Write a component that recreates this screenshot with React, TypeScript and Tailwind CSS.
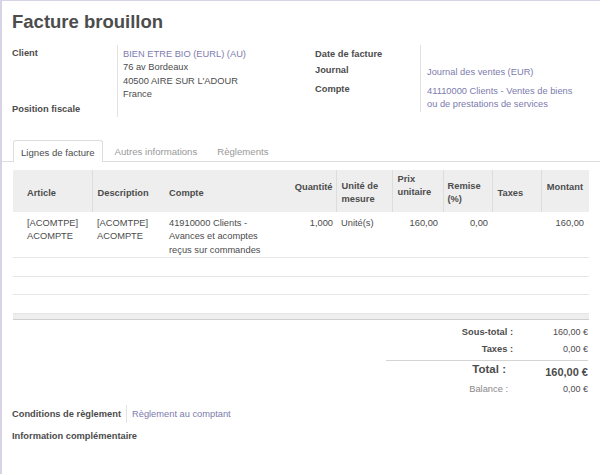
export default function App() {
  const link = "text-[#7c7bad]"

  return (
    <div className="h-[474px] w-[600px] overflow-hidden border-l-2 border-t border-[#d6d4e4] bg-white font-['Liberation_Sans',Arial,sans-serif] text-[9.3px] leading-[13.3px] text-[#4c4c4c]">
      {/* title */}
      <h1 className="pl-[10px] pt-[10px] text-[18.5px] font-bold leading-[22px] text-[#4c4c4c]">
        Facture brouillon
      </h1>

      {/* header groups */}
      <div className="mt-[12px] flex pl-[10px]">
        <div className="w-[303px]">
          <div className="flex">
            <div className="w-[105px] pt-[2px] font-bold">Client</div>
            <div className="flex-1 border-l border-[#e2e2e2] pl-[5px] pt-[3px]">
              <div className={link}>BIEN ETRE BIO (EURL) (AU)</div>
              <div>76 av Bordeaux</div>
              <div>40500 AIRE SUR L'ADOUR</div>
              <div>France</div>
            </div>
          </div>
          <div className="flex h-[16px]">
            <div className="w-[105px] pt-[2px] font-bold">Position fiscale</div>
            <div className="flex-1 border-l border-[#e2e2e2]"></div>
          </div>
        </div>

        <div className="flex-1">
          <div className="flex h-[16.5px]">
            <div className="w-[105px] pt-[2.5px] font-bold">Date de facture</div>
            <div className="flex-1 border-l border-[#e2e2e2]"></div>
          </div>
          <div className="flex h-[19px]">
            <div className="w-[105px] pt-[2px] font-bold">Journal</div>
            <div className={`flex-1 border-l border-[#e2e2e2] pl-[6px] pt-[4px] ${link}`}>
              Journal des ventes (EUR)
            </div>
          </div>
          <div className="flex h-[31px]">
            <div className="w-[105px] pt-[2px] font-bold">Compte</div>
            <div className={`flex-1 border-l border-[#e2e2e2] pl-[6px] pt-[4px] ${link}`}>
              41110000 Clients - Ventes de biens
              <br />
              ou de prestations de services
            </div>
          </div>
        </div>
      </div>

      {/* tabs */}
      <div className="mt-[23px] flex items-end border-b border-[#dddddd] pl-[11px] text-[9.6px]">
        <div className="-mb-px flex h-[22px] items-center rounded-t-[3px] border-x border-t border-[#dddddd] bg-white px-[7px] pt-[2px]">
          Lignes de facture
        </div>
        <div className="ml-[4px] flex h-[21px] items-center px-[8px] pt-[2px] text-[#999999]">
          Autres informations
        </div>
        <div className="ml-[4px] flex h-[21px] items-center px-[8px] pt-[2px] text-[#999999]">
          Règlements
        </div>
      </div>

      {/* lines table */}
      <div className="ml-[11px] mt-[8px] w-[576px]">
        <table className="w-full table-fixed border-collapse">
          <colgroup>
            <col className="w-[79px]" />
            <col className="w-[68px]" />
            <col className="w-[126px]" />
            <col className="w-[50px]" />
            <col className="w-[56px]" />
            <col className="w-[51px]" />
            <col className="w-[49px]" />
            <col className="w-[49px]" />
            <col className="w-[48px]" />
          </colgroup>
          <thead>
            <tr className="h-[42px] bg-[#eeeeee] font-bold">
              <th className="pl-[14px] pt-[4px] text-left align-middle">Article</th>
              <th className="border-l border-[#dddddd] pl-[5px] pt-[4px] text-left align-middle">Description</th>
              <th className="pl-[9px] pt-[4px] text-left align-middle">Compte</th>
              <th className="pb-[8px] pr-[3px] text-right align-middle">Quantité</th>
              <th className="border-l border-[#dddddd] pl-[5px] pt-[4px] text-left align-middle">
                Unité de
                <br />
                mesure
              </th>
              <th className="border-l border-[#dddddd] pb-[10px] pl-[5px] text-left align-middle">
                Prix
                <br />
                unitaire
              </th>
              <th className="border-l border-[#dddddd] pl-[4px] pt-[4px] text-left align-middle">
                Remise
                <br />
                (%)
              </th>
              <th className="border-l border-[#dddddd] pl-[5px] pt-[4px] text-left align-middle">Taxes</th>
              <th className="border-l border-[#dddddd] pb-[8px] pr-[6px] text-right align-middle">Montant</th>
            </tr>
          </thead>
          <tbody>
            <tr className="h-[44px] border-b border-[#e6e6e6] align-top">
              <td className="pl-[14px] pt-[5px]">
                [ACOMTPE]
                <br />
                ACOMPTE
              </td>
              <td className="pl-[5px] pt-[5px]">
                [ACOMTPE]
                <br />
                ACOMPTE
              </td>
              <td className="pl-[9px] pt-[5px]">
                41910000 Clients -
                <br />
                Avances et acomptes
                <br />
                reçus sur commandes
              </td>
              <td className="pr-[3px] pt-[5px] text-right">1,000</td>
              <td className="pl-[5px] pt-[5px]">Unité(s)</td>
              <td className="pr-[5px] pt-[5px] text-right">160,00</td>
              <td className="pr-[4px] pt-[5px] text-right">0,00</td>
              <td className="pt-[5px]"></td>
              <td className="pr-[5px] pt-[5px] text-right">160,00</td>
            </tr>
            {[0, 1, 2].map((i) => (
              <tr key={i} className={`h-[18.7px] ${i < 2 ? "border-b border-[#e6e6e6]" : ""}`}>
                <td colSpan={9}></td>
              </tr>
            ))}
          </tbody>
          <tfoot>
            <tr className="h-[6px] border-y border-t-[#e6e6e6] border-b-[#cfcfcf] bg-[#eeeeee]">
              <td colSpan={9}></td>
            </tr>
          </tfoot>
        </table>
      </div>

      {/* totals */}
      <div className="ml-auto mr-[12px] mt-[4px] w-[202px]">
        <div className="flex h-[17px] items-center">
          <div className="flex-1 text-right font-bold">Sous-total :</div>
          <div className="w-[75px] text-right text-[9px]">160,00 €</div>
        </div>
        <div className="flex h-[17px] items-center">
          <div className="flex-1 text-right font-bold">Taxes :</div>
          <div className="w-[75px] text-right text-[9px]">0,00 €</div>
        </div>
        <div className="mt-[2px] flex h-[21px] items-start border-t border-[#d4d4d4]">
          <div className="flex-1 pr-[7px] pt-[1px] text-right text-[11.5px] font-bold leading-[14px]">Total :</div>
          <div className="w-[75px] pt-[4px] text-right text-[11px] font-bold leading-[14px]">160,00 €</div>
        </div>
        <div className="flex h-[17px] items-center">
          <div className="flex-1 pr-[5px] text-right text-[#888888]">Balance :</div>
          <div className="w-[75px] pt-[1px] text-right text-[9px]">0,00 €</div>
        </div>
      </div>

      {/* footer fields */}
      <div className="mt-[7px] pl-[10px]">
        <div className="flex h-[18px] items-center">
          <div className="w-[114px] pt-[1px] font-bold">Conditions de règlement</div>
          <div className={`flex h-full items-center border-l border-[#e2e2e2] pl-[5px] pt-[1px] ${link}`}>
            Règlement au comptant
          </div>
        </div>
        <div className="mt-[7px] font-bold">Information complémentaire</div>
      </div>
    </div>
  )
}
